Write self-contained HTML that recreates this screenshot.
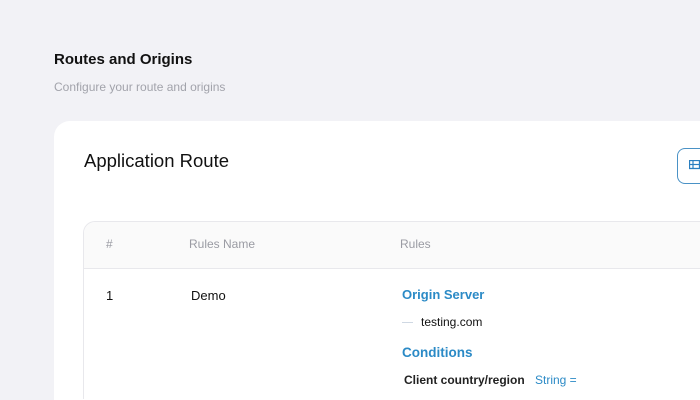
<!DOCTYPE html><html><head><style>
html,body{margin:0;width:700px;height:400px;overflow:hidden}
body{background:#f2f2f6;font-family:"Liberation Sans",sans-serif;position:relative}
.a{position:absolute;white-space:nowrap}
</style></head><body>
<div class="a" style="left:54px;top:51px;font-size:15px;font-weight:600;color:#111">Routes and Origins</div>
<div class="a" style="left:54px;top:80px;font-size:12px;color:#a2a3ab">Configure your route and origins</div>
<div class="a" style="left:54px;top:121px;width:646px;height:279px;background:#fff;border-radius:16px 0 0 0"></div>
<div class="a" style="left:84px;top:150px;font-size:18.5px;color:#111">Application Route</div>
<div class="a" style="left:677px;top:148px;width:23px;height:34px;border:1px solid #4a92c6;border-right:none;border-radius:8px 0 0 8px;background:#fff"></div>
<svg class="a" style="left:689px;top:160px" width="11" height="10"><rect x="0.5" y="0.5" width="10" height="8" fill="none" stroke="#2b7fc0" stroke-width="1.3"/><line x1="0" y1="4.5" x2="11" y2="4.5" stroke="#2b7fc0" stroke-width="1.2"/><line x1="4" y1="0" x2="4" y2="9" stroke="#2b7fc0" stroke-width="1.2"/></svg>
<div class="a" style="left:83px;top:221px;width:616px;height:177px;border:1px solid #e8e8ec;border-right:none;border-bottom:none;border-radius:12px 0 0 0;overflow:hidden">
<div style="height:46px;background:#fafafa;border-bottom:1px solid #e8e8ec"></div></div>
<div class="a" style="left:106px;top:237px;font-size:12px;color:#9a9ba3">#</div>
<div class="a" style="left:189px;top:237px;font-size:12px;color:#9a9ba3">Rules Name</div>
<div class="a" style="left:400px;top:237px;font-size:12px;color:#9a9ba3">Rules</div>
<div class="a" style="left:106px;top:288px;font-size:13px;color:#111">1</div>
<div class="a" style="left:191px;top:288px;font-size:13px;color:#111">Demo</div>
<div class="a" style="left:402px;top:287px;font-size:13px;font-weight:600;color:#2b8ac6">Origin Server</div>
<div class="a" style="left:402px;top:322px;width:11px;height:1px;background:#cfd8e3"></div>
<div class="a" style="left:421px;top:315px;font-size:12px;color:#111">testing.com</div>
<div class="a" style="left:402px;top:345px;font-size:13.5px;font-weight:600;color:#2b8ac6">Conditions</div>
<div class="a" style="left:404px;top:373px;font-size:12px;font-weight:bold;color:#222">Client country/region</div>
<div class="a" style="left:535px;top:373px;font-size:12px;color:#2b8ac6">String =</div>
</body></html>
